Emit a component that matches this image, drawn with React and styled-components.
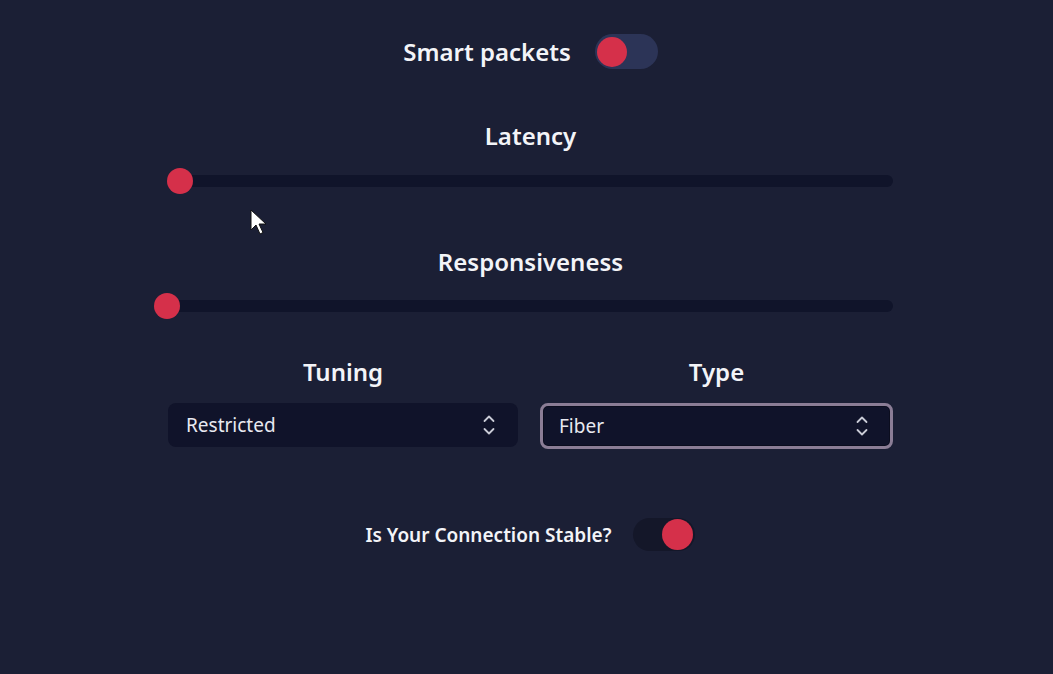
import React from "react";
import styled, { createGlobalStyle } from "styled-components";

const Global = createGlobalStyle`
  html, body { margin: 0; padding: 0; background: #1b1f35; }
  body { font-family: "Noto Sans", "Open Sans", sans-serif; color: #f1f2f7; }
  * { box-sizing: border-box; }
`;

const Page = styled.div`
  position: relative;
  width: 1053px;
  height: 674px;
  background: #1b1f35;
  display: flex;
  flex-direction: column;
  align-items: flex-start;
  padding-left: 168px;
  padding-top: 34px;
`;

const Panel = styled.div`
  width: 725px;
  display: flex;
  flex-direction: column;
  align-items: stretch;
`;

const ToggleRow = styled.div`
  display: flex;
  align-items: center;
  justify-content: center;
  gap: ${(p) => p.$gap}px;
  margin-top: ${(p) => p.$mt || 0}px;
`;

const ToggleLabel = styled.span`
  font-size: ${(p) => p.$size}px;
  font-weight: 600;
  color: #f3f4f8;
`;

const Track = styled.div`
  width: ${(p) => p.$w}px;
  height: ${(p) => p.$h}px;
  border-radius: 999px;
  background: ${(p) => p.$bg};
  display: flex;
  align-items: center;
  justify-content: ${(p) => (p.$on ? "flex-end" : "flex-start")};
  padding: 0 2px;
`;

const Knob = styled.div`
  width: ${(p) => p.$d}px;
  height: ${(p) => p.$d}px;
  border-radius: 50%;
  background: #d5304a;
`;

const Section = styled.div`
  display: flex;
  flex-direction: column;
  align-items: center;
  margin-top: ${(p) => p.$mt}px;
`;

const Title = styled.div`
  font-size: 24px;
  font-weight: 600;
  color: #f3f4f8;
  line-height: 30px;
  text-align: center;
`;

const SliderTrack = styled.div`
  position: relative;
  width: 100%;
  height: 12px;
  border-radius: 6px;
  background: #10142a;
  margin-top: ${(p) => p.$mt}px;
`;

const Thumb = styled.div`
  position: absolute;
  top: 50%;
  width: 26px;
  height: 26px;
  margin-left: -13px;
  margin-top: -13px;
  border-radius: 50%;
  background: #d5304a;
`;

const Grid = styled.div`
  display: grid;
  grid-template-columns: 350px 353px;
  column-gap: 22px;
  align-items: start;
  margin-top: 45px;
`;

const Field = styled.div`
  display: flex;
  flex-direction: column;
  align-items: center;
  gap: 16px;
`;

const SelectBox = styled.div`
  width: 100%;
  height: ${(p) => (p.$focus ? 46 : 44)}px;
  border-radius: 8px;
  background: #10132a;
  display: flex;
  align-items: center;
  justify-content: space-between;
  padding: ${(p) => (p.$focus ? "0 22px 0 16px" : "0 23px 0 18px")};
  font-size: 19px;
  color: #e8e9f0;
  border: ${(p) => (p.$focus ? "3px solid #8b7d96" : "none")};
  box-shadow: ${(p) => (p.$focus ? "inset 0 0 0 1px #0b0d1e" : "none")};
`;

const Cursor = styled.svg`
  position: absolute;
  left: 250px;
  top: 209px;
`;

function Toggle({ on, w, h, d, bg }) {
  return (
    <Track $on={on} $w={w} $h={h} $bg={bg}>
      <Knob $d={d} />
    </Track>
  );
}

function Slider({ value, mt }) {
  return (
    <SliderTrack $mt={mt}>
      <Thumb style={{ left: `${value}%` }} />
    </SliderTrack>
  );
}

function UpDown() {
  return (
    <svg width="12" height="22" viewBox="0 0 12 22" fill="none" stroke="#c9cbd6" strokeWidth="1.8" strokeLinecap="round" strokeLinejoin="round">
      <path d="M1.5 7 L6 2.5 L10.5 7" />
      <path d="M1.5 15 L6 19.5 L10.5 15" />
    </svg>
  );
}

function Select({ value, focus }) {
  return (
    <SelectBox $focus={focus}>
      <span>{value}</span>
      <UpDown />
    </SelectBox>
  );
}

export default function App() {
  return (
    <>
      <Global />
      <Page>
        <Panel>
          <ToggleRow $gap={24}>
            <ToggleLabel $size={24}>Smart packets</ToggleLabel>
            <Toggle on={false} w={63} h={35} d={30} bg="#2c3457" />
          </ToggleRow>

          <Section $mt={52}>
            <Title>Latency</Title>
          </Section>
          <Slider value={1.7} mt={24} />

          <Section $mt={60}>
            <Title>Responsiveness</Title>
          </Section>
          <Slider value={-0.1} mt={23} />

          <Grid>
            <Field>
              <Title>Tuning</Title>
              <Select value="Restricted" />
            </Field>
            <Field>
              <Title>Type</Title>
              <Select value="Fiber" focus />
            </Field>
          </Grid>

          <ToggleRow $gap={22} $mt={69}>
            <ToggleLabel $size={19}>Is Your Connection Stable?</ToggleLabel>
            <Toggle on w={62} h={33} d={31} bg="#141729" />
          </ToggleRow>
        </Panel>
        <Cursor width="18" height="28" viewBox="0 0 18 28">
          <path d="M1 1 L1 21 L6 16 L10 25 L13 23.5 L9 15 L16 15 Z" fill="#ffffff" stroke="#111" strokeWidth="1" />
        </Cursor>
      </Page>
    </>
  );
}
